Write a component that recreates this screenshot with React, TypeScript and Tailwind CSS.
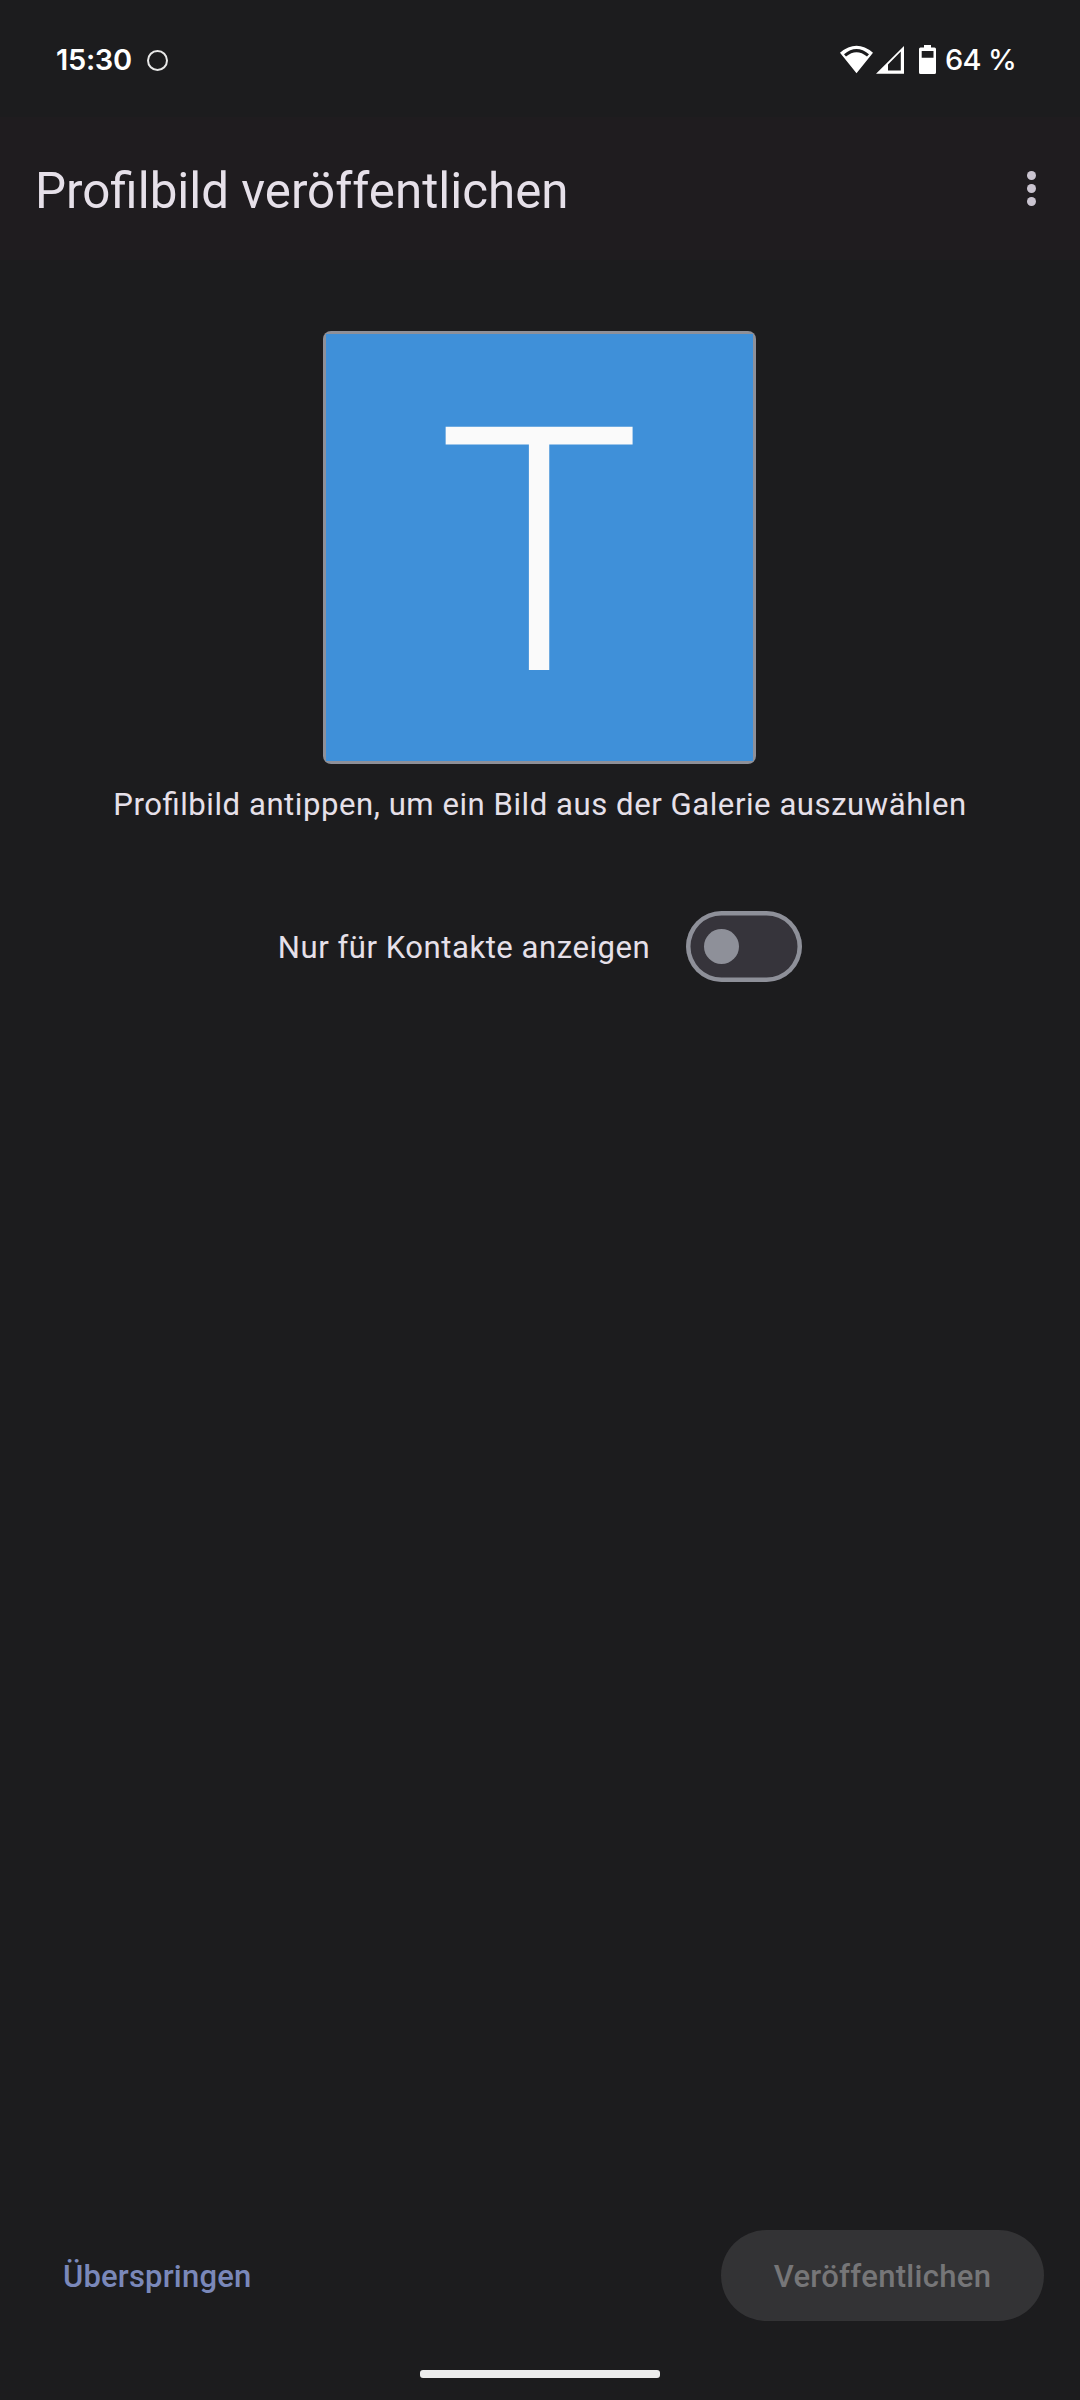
function StatusIcons() {
  return (
    <svg width="98" height="32" viewBox="839 44 98 32" fill="#fff" fillRule="evenodd">
      <path d="M840 52.7Q856.5 38.8 873 52.7L856.5 73.2ZM844 54.2L846 56.6Q856.5 47.8 867 56.6L869 54.2Q856.5 43.6 844 54.2Z" />
      <path d="M876 73.7L904 46V73.7ZM888 70.6H900.8V51.6L888 64.4Z" />
      <path d="M924 45H931V47.5H934.5Q936 47.5 936 49V72.5Q936 74 934.5 74H920.5Q919 74 919 72.5V49Q919 47.5 920.5 47.5H924ZM921.7 51V57.7H933.5V51Z" />
    </svg>
  );
}

function StatusBar() {
  return (
    <div className="flex h-[117px] items-start justify-between bg-[#1c1c1e] pl-[56px] pr-[65px] pt-[44px] font-['Inter',sans-serif] text-[29px] leading-[32px] text-white">
      <div className="flex items-start">
        <span className="w-[91px] font-semibold tracking-[-0.3px]">15:30</span>
        <span className="mt-[6px] h-[21px] w-[21px] rounded-full border-2 border-[#e8e8e8]" />
      </div>
      <div className="flex items-start">
        <StatusIcons />
        <span className="ml-[8px] w-[70px] whitespace-nowrap font-medium tracking-[-0.7px]">64 %</span>
      </div>
    </div>
  );
}

function ContactsSwitch() {
  return (
    <button
      role="switch"
      aria-checked="false"
      aria-label="Nur für Kontakte anzeigen"
      className="flex h-[71px] w-[116px] items-center rounded-full bg-[#36343b] pl-[17.7px] shadow-[inset_0_0_0_4.5px_#8e9099]"
    >
      <span className="h-[35.5px] w-[35.5px] rounded-full bg-[#8e9099]" />
    </button>
  );
}

export default function App() {
  return (
    <div className="flex h-[2400px] w-[1080px] flex-col bg-[#1c1c1e] font-['Roboto',sans-serif] text-[#e6e0e9]">
      <StatusBar />
      <header className="flex h-[143px] items-center justify-between bg-[#1f1c1f] pl-[35px] pr-[44px]">
        <h1 className="pt-[4px] text-[49.25px] leading-[58px]">Profilbild veröffentlichen</h1>
        <button aria-label="Weitere Optionen" className="flex flex-col gap-[4.3px]">
          <span className="h-[9px] w-[9px] rounded-full bg-[#cac4d0]" />
          <span className="h-[9px] w-[9px] rounded-full bg-[#cac4d0]" />
          <span className="h-[9px] w-[9px] rounded-full bg-[#cac4d0]" />
        </button>
      </header>

      <main className="flex flex-1 flex-col items-center pr-[1px] pt-[71px]">
        <div className="h-[433px] w-[433px] overflow-hidden rounded-[8px] bg-[#8e9099] p-[3px]">
          <div className="flex h-full w-full justify-center bg-[#3f90d9] pr-[1px] pt-[48px] text-[342px] font-light leading-[342px] text-[#fafafa]">
            T
          </div>
        </div>
        <p className="mt-[19px] whitespace-nowrap pl-[1px] text-[31.1px] leading-[44px] tracking-[0.55px] [font-feature-settings:'liga']">
          Profilbild antippen, um ein Bild aus der Galerie auszuwählen
        </p>
        <div className="mt-[84px] flex items-center gap-[36px]">
          <span className="whitespace-nowrap pl-[1px] pt-[2px] text-[31.1px] leading-[44px] tracking-[0.52px]">
            Nur für Kontakte anzeigen
          </span>
          <ContactsSwitch />
        </div>
      </main>

      <footer className="flex items-center justify-between pl-[63px] pr-[36px] text-[31px] font-medium">
        <button className="pt-[3px] tracking-[0.18px] text-[#7a88ba]">Überspringen</button>
        <button className="flex h-[91px] w-[323px] items-center justify-center rounded-full bg-[#333335] pt-[3px] tracking-[0.3px] text-[#767678]">
          Veröffentlichen
        </button>
      </footer>
      <div className="mb-[22px] mt-[49px] h-[8px] w-[240px] self-center rounded-[3px] bg-[#ececec]" />
    </div>
  );
}
